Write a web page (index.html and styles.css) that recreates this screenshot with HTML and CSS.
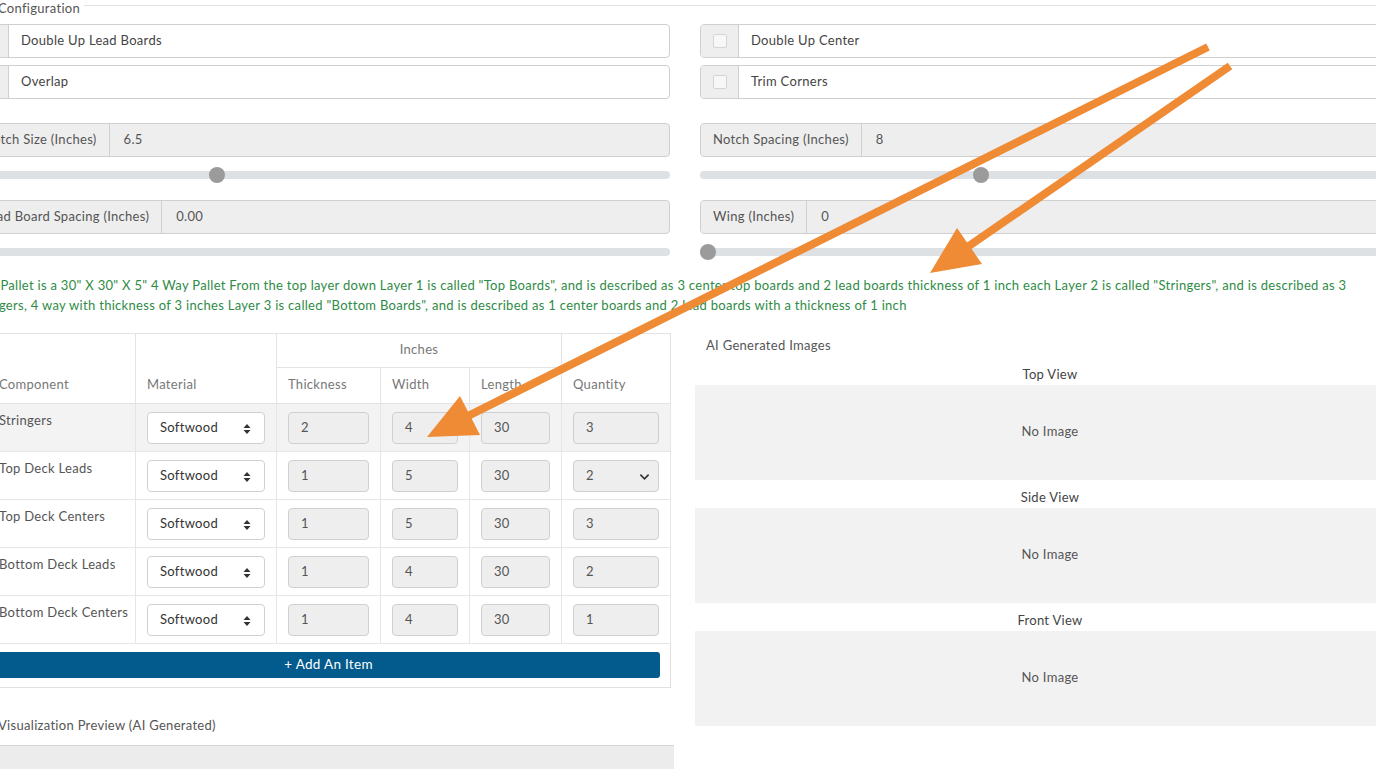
FILE: index.html
```html
<!DOCTYPE html>
<html>
<head>
<meta charset="utf-8">
<title>Pallet Configuration</title>
<link rel="stylesheet" href="styles.css">
</head>
<body>
<div class="page">
  <div class="legend-row"><span class="legend">Configuration</span><span class="legend-line"></span></div>

  <div class="grid2 checks">
    <div class="ig"><span class="addon chk"><span class="box"></span></span><span class="field">Double Up Lead Boards</span></div>
    <div class="ig"><span class="addon chk"><span class="box"></span></span><span class="field">Double Up Center</span></div>
    <div class="ig"><span class="addon chk"><span class="box"></span></span><span class="field">Overlap</span></div>
    <div class="ig"><span class="addon chk"><span class="box"></span></span><span class="field">Trim Corners</span></div>
  </div>

  <div class="grid2 sliders">
    <div class="slider-block">
      <div class="ig gray"><span class="addon lbl">Notch Size (Inches)</span><span class="field ro">6.5</span></div>
      <input class="range" type="range" min="0" max="100" step="0.1" value="34.9">
    </div>
    <div class="slider-block">
      <div class="ig gray"><span class="addon lbl">Notch Spacing (Inches)</span><span class="field ro">8</span></div>
      <input class="range" type="range" min="0" max="100" step="0.1" value="39.9">
    </div>
    <div class="slider-block">
      <div class="ig gray"><span class="addon lbl">Lead Board Spacing (Inches)</span><span class="field ro">0.00</span></div>
      <input class="range" type="range" min="0" max="100" step="0.1" value="0">
    </div>
    <div class="slider-block">
      <div class="ig gray"><span class="addon lbl">Wing (Inches)</span><span class="field ro">0</span></div>
      <input class="range" type="range" min="0" max="100" step="0.1" value="0">
    </div>
  </div>

  <p class="desc">This Pallet is a 30" X 30" X 5" 4 Way Pallet From the top layer down Layer 1 is called "Top Boards", and is described as 3 center top boards and 2 lead boards thickness of 1 inch each Layer 2 is called "Stringers", and is described as 3 stringers, 4 way with thickness of 3 inches Layer 3 is called "Bottom Boards", and is described as 1 center boards and 2 lead boards with a thickness of 1 inch</p>

  <div class="grid2 lower">
    <div class="left">
      <table class="items">
        <colgroup>
          <col class="c-comp"><col class="c-mat"><col class="c-th"><col class="c-w"><col class="c-l"><col class="c-q">
        </colgroup>
        <thead>
          <tr class="h1">
            <th rowspan="2" class="bottom first">Component</th>
            <th rowspan="2" class="bottom">Material</th>
            <th colspan="3" class="center">Inches</th>
            <th rowspan="2" class="bottom">Quantity</th>
          </tr>
          <tr class="h2">
            <th>Thickness</th><th>Width</th><th>Length</th>
          </tr>
        </thead>
        <tbody>
          <tr class="hl">
            <td class="first name">Stringers</td>
            <td><div class="sel">Softwood<svg class="ud" viewBox="0 0 8 12"><path d="M4 1 L7.5 5 H0.5 Z M4 11 L7.5 7 H0.5 Z"/></svg></div></td>
            <td><div class="inp">2</div></td><td><div class="inp">4</div></td><td><div class="inp">30</div></td><td><div class="inp">3</div></td>
          </tr>
          <tr>
            <td class="first name">Top Deck Leads</td>
            <td><div class="sel">Softwood<svg class="ud" viewBox="0 0 8 12"><path d="M4 1 L7.5 5 H0.5 Z M4 11 L7.5 7 H0.5 Z"/></svg></div></td>
            <td><div class="inp">1</div></td><td><div class="inp">5</div></td><td><div class="inp">30</div></td>
            <td><div class="inp qsel">2<svg class="chev" viewBox="0 0 12 8"><path d="M1.5 1.5 L6 6 L10.5 1.5"/></svg></div></td>
          </tr>
          <tr>
            <td class="first name">Top Deck Centers</td>
            <td><div class="sel">Softwood<svg class="ud" viewBox="0 0 8 12"><path d="M4 1 L7.5 5 H0.5 Z M4 11 L7.5 7 H0.5 Z"/></svg></div></td>
            <td><div class="inp">1</div></td><td><div class="inp">5</div></td><td><div class="inp">30</div></td><td><div class="inp">3</div></td>
          </tr>
          <tr>
            <td class="first name">Bottom Deck Leads</td>
            <td><div class="sel">Softwood<svg class="ud" viewBox="0 0 8 12"><path d="M4 1 L7.5 5 H0.5 Z M4 11 L7.5 7 H0.5 Z"/></svg></div></td>
            <td><div class="inp">1</div></td><td><div class="inp">4</div></td><td><div class="inp">30</div></td><td><div class="inp">2</div></td>
          </tr>
          <tr>
            <td class="first name">Bottom Deck Centers</td>
            <td><div class="sel">Softwood<svg class="ud" viewBox="0 0 8 12"><path d="M4 1 L7.5 5 H0.5 Z M4 11 L7.5 7 H0.5 Z"/></svg></div></td>
            <td><div class="inp">1</div></td><td><div class="inp">4</div></td><td><div class="inp">30</div></td><td><div class="inp">1</div></td>
          </tr>
        </tbody>
        <tfoot>
          <tr><td colspan="6" class="foot"><div class="add-btn">+ Add An Item</div></td></tr>
        </tfoot>
      </table>
      <div class="viz-label">Visualization Preview (AI Generated)</div>
      <div class="viz-box"></div>
    </div>

    <div class="right">
      <div class="ai-label">AI Generated Images</div>
      <div class="view-label">Top View</div>
      <div class="view-box">No Image</div>
      <div class="view-label">Side View</div>
      <div class="view-box">No Image</div>
      <div class="view-label">Front View</div>
      <div class="view-box">No Image</div>
    </div>
  </div>
</div>

<svg class="arrows" width="1376" height="769" viewBox="0 0 1376 769">
  <g stroke="#ef8b35" stroke-width="8" fill="none">
    <line x1="1208" y1="47" x2="466" y2="417"/>
    <line x1="1230" y1="66" x2="966" y2="248"/>
  </g>
  <g fill="#ef8b35">
    <polygon points="427,437 460,396 480,435"/>
    <polygon points="930,273 957,228 982,264"/>
  </g>
</svg>
</body>
</html>
```

FILE: styles.css
```css
html, body {
  margin: 0;
  padding: 0;
}
body {
  font-family: Lato, "Noto Sans", "DejaVu Sans", sans-serif;
  font-size: 13px;
  letter-spacing: 0.3px;
  color: #555;
  background: #fff;
  overflow: hidden;
}
.page {
  margin-left: -30px;
  margin-top: -3px;
  width: 1430px;
}

/* legend */
.legend-row {
  display: flex;
  align-items: flex-start;
  height: 18px;
}
.legend {
  padding-left: 28px;
  padding-right: 4px;
  line-height: 18px;
  padding-top: 2px;
  color: #555;
}
.legend-line {
  flex: 1;
  margin-top: 8px;
  border-top: 1px solid #e3e3e3;
}

.grid2 {
  display: grid;
  grid-template-columns: 700px 700px;
  column-gap: 30px;
}

/* input groups */
.checks {
  margin-top: 9px;
  row-gap: 7px;
}
.ig {
  display: flex;
  height: 34px;
  box-sizing: border-box;
  border: 1px solid #cfcfcf;
  border-radius: 4px;
  background: #fff;
  overflow: hidden;
}
.addon {
  display: flex;
  align-items: center;
  background: #eee;
  border-right: 1px solid #cfcfcf;
  box-sizing: border-box;
}
.addon.chk {
  width: 38px;
  justify-content: center;
}
.box {
  width: 12px;
  height: 12px;
  border: 1px solid #d4d4d4;
  border-radius: 2px;
  background: #f7f7f7;
}
.field {
  flex: 1;
  display: flex;
  align-items: center;
  padding-left: 12px;
  padding-bottom: 3px;
  color: #444;
}
.ig.gray {
  background: #eee;
}
.addon.lbl {
  padding: 0 12px 3px 12px;
  color: #555;
}
.field.ro {
  padding-left: 14px;
  color: #555;
}

/* sliders */
.sliders {
  margin-top: 24px;
  row-gap: 17px;
}
.range {
  -webkit-appearance: none;
  appearance: none;
  display: block;
  width: 100%;
  height: 16px;
  margin: 10px 0 0 0;
  padding: 0;
  background: transparent;
}
.range::-webkit-slider-runnable-track {
  height: 8px;
  border-radius: 4px;
  background: #dee1e4;
}
.range::-webkit-slider-thumb {
  -webkit-appearance: none;
  width: 16px;
  height: 16px;
  border-radius: 50%;
  background: #9b9b9b;
  border: none;
  margin-top: -4px;
}

/* description */
.desc {
  margin: 16px 0 0 0;
  padding-left: 2px;
  line-height: 19.5px;
  color: #2e8b45;
  font-size: 13px;
}

/* lower area */
.lower {
  margin-top: 18px;
}
.items {
  margin-left: 16px;
  width: 684px;
  border-collapse: collapse;
  table-layout: fixed;
  border: 1px solid #e0e0e0;
}
.c-comp { width: 149px; }
.c-mat { width: 141px; }
.c-th { width: 104px; }
.c-w { width: 89px; }
.c-l { width: 92px; }
.c-q { width: 109px; }

.items th {
  font-weight: normal;
  color: #777;
  text-align: left;
  border: 1px solid #e3e3e3;
  padding: 0 11px 3px 11px;
  vertical-align: middle;
}
.items th.first, .items td.first {
  padding-left: 12px;
}
.items tr.h1 th {
  height: 30px;
}
.items tr.h2 th {
  height: 32px;
}
.items th.bottom {
  vertical-align: bottom;
  padding-bottom: 11px;
}
.items th.center {
  text-align: center;
}
.items td {
  border: 1px solid #e6e6e6;
  padding: 8px 11px 7px 11px;
  height: 32px;
  vertical-align: top;
}
.items td.name {
  padding-top: 8px;
  color: #555;
  line-height: 17px;
  white-space: nowrap;
  overflow: visible;
}
.items tr.hl td {
  background: #f3f3f3;
}
.inp, .sel {
  box-sizing: border-box;
  height: 32px;
  border: 1px solid #d0d0d0;
  border-radius: 4px;
  display: flex;
  align-items: center;
  padding-left: 12px;
  padding-bottom: 2px;
  color: #555;
  position: relative;
}
.inp {
  background: #eee;
}
.sel {
  background: #fff;
  color: #333;
}
.ud {
  position: absolute;
  right: 13px;
  top: 10px;
  width: 8px;
  height: 12px;
  fill: #333;
}
.chev {
  position: absolute;
  right: 8px;
  top: 12px;
  width: 11px;
  height: 8px;
  fill: none;
  stroke: #333;
  stroke-width: 1.8;
}
.items td.foot {
  padding: 8px 10px 9px 10px;
  height: auto;
  border: none;
  border-top: 1px solid #e6e6e6;
}
.add-btn {
  height: 26px;
  box-sizing: border-box;
  padding-bottom: 2px;
  background: #035a8d;
  border-radius: 3px;
  color: #fff;
  display: flex;
  align-items: center;
  justify-content: center;
  font-size: 13.5px;
}
.viz-label {
  margin-top: 28px;
  padding-left: 28px;
  line-height: 18px;
  color: #555;
}
.viz-box {
  margin: 11px -4px 0 16px;
  height: 60px;
  background: #ececec;
  border-top: 1px solid #d6d6d6;
}

/* right column */
.right {
  padding-top: 3px;
}
.ai-label {
  padding-left: 6px;
  line-height: 18px;
  color: #555;
}
.view-label {
  text-align: center;
  line-height: 18px;
  color: #444;
  margin: 11px 0 2px 0;
}
.view-box + .view-label {
  margin-top: 8px;
}
.view-box {
  box-sizing: border-box;
  margin-left: -5px;
  margin-right: -5px;
  height: 95px;
  padding-bottom: 3px;
  background: #f2f2f2;
  display: flex;
  align-items: center;
  justify-content: center;
  color: #555;
}

.arrows {
  position: absolute;
  left: 0;
  top: 0;
  pointer-events: none;
}
```
